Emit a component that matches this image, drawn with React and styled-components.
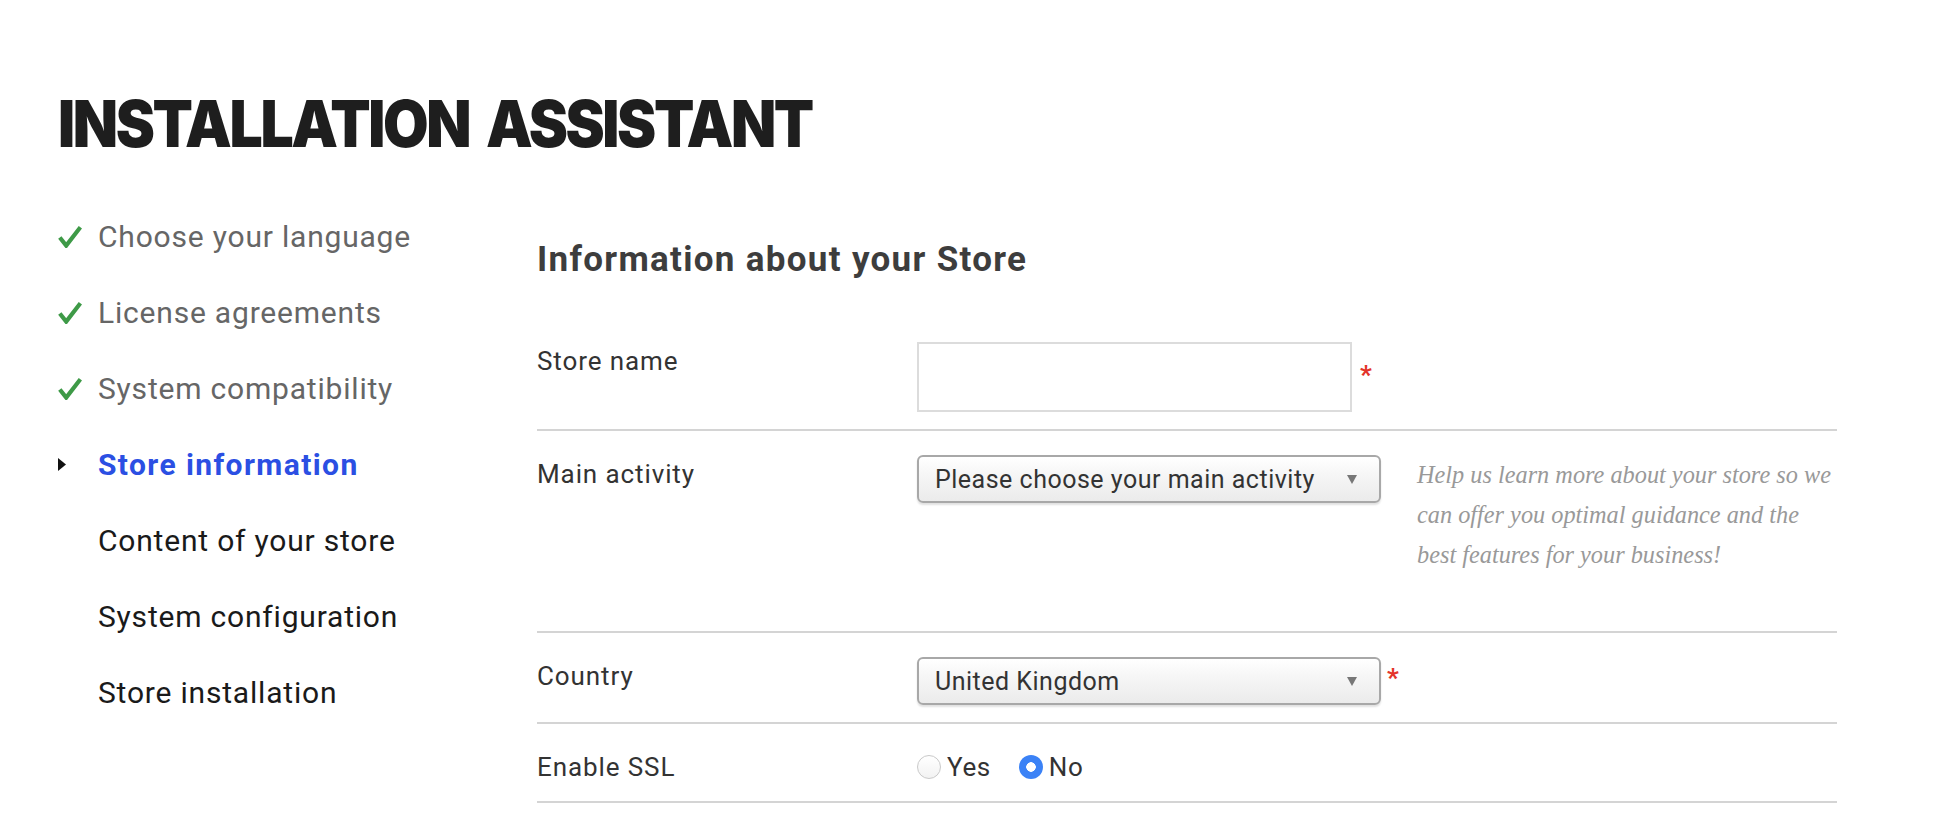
import React from "react";
import styled, { createGlobalStyle } from "styled-components";

const GlobalStyle = createGlobalStyle`
  html, body {
    margin: 0;
    padding: 0;
    background: #fff;
  }
  body {
    font-family: Roboto, "Noto Sans", sans-serif;
    color: #333;
  }
`;

const Page = styled.div`
  padding: 92px 0 0 58px;
  width: 1779px;
`;

const Title = styled.h1`
  margin: 0;
  font-family: Inter, "Liberation Sans", sans-serif;
  font-weight: 900;
  font-size: 64px;
  line-height: 64px;
  letter-spacing: -2.6px;
  word-spacing: 8px;
  color: #1e1e1e;
  text-transform: uppercase;
  transform: scaleX(0.92);
  transform-origin: left center;
`;

const Layout = styled.div`
  display: grid;
  grid-template-columns: 479px 1300px;
  margin-top: 42px;
`;

const Steps = styled.ul`
  list-style: none;
  margin: 0;
  padding: 0;
`;

const Step = styled.li`
  display: flex;
  align-items: center;
  gap: 16px;
  height: 76px;
  font-size: 30px;
  font-weight: ${(p) => (p.$state === "active" ? 700 : 400)};
  letter-spacing: ${(p) => (p.$state === "active" ? "1.4px" : "0.8px")};
  color: ${(p) =>
    p.$state === "done" ? "#666" : p.$state === "active" ? "#2b4fe3" : "#1a1a1a"};
`;

const StepMark = styled.span`
  width: 24px;
  height: 24px;
  display: flex;
  align-items: center;
  justify-content: ${(p) => (p.$active ? "flex-start" : "center")};
  flex: none;
`;

const Main = styled.section``;

const Heading = styled.h2`
  margin: 42px 0 38px;
  font-size: 35px;
  line-height: 40px;
  font-weight: 700;
  letter-spacing: 1.3px;
  color: #3d3d3d;
`;

const Row = styled.div`
  display: grid;
  grid-template-columns: 380px 1fr;
  padding: 24px 0 ${(p) => p.$pb || 17}px;
  & + & {
    border-top: 2px solid #d4d4d4;
  }
  &:last-child {
    border-bottom: 2px solid #d4d4d4;
  }
`;

const Label = styled.div`
  font-size: 26px;
  line-height: 38px;
  letter-spacing: 0.9px;
  color: #333;
`;

const Control = styled.div`
  display: flex;
  align-items: flex-start;
`;

const TextInput = styled.input`
  box-sizing: border-box;
  width: 435px;
  height: 70px;
  border: 2px solid #dcdcdc;
  background: #fff;
  margin: 0;
  padding: 0 14px;
  font: inherit;
  font-size: 24px;
  outline: none;
`;

const Required = styled.span`
  color: #e3342a;
  font-size: 26px;
  font-weight: 700;
  line-height: 1;
  margin-left: ${(p) => p.$gap || 12}px;
  margin-top: ${(p) => p.$top || 20}px;
`;

const Select = styled.div`
  box-sizing: border-box;
  width: 464px;
  height: 48px;
  border: 2px solid #a8a8a8;
  border-radius: 6px;
  background: linear-gradient(#ffffff 0%, #f6f6f6 40%, #ebebeb 100%);
  box-shadow: 0 2px 2px rgba(0, 0, 0, 0.12);
  display: flex;
  align-items: center;
  justify-content: space-between;
  padding: 0 22px 0 16px;
  font-size: 25px;
  letter-spacing: 0.5px;
  color: #333;
  flex: none;
`;

const Help = styled.p`
  margin: 0 0 39px 36px;
  width: 420px;
  font-family: "Liberation Serif", "DejaVu Serif", serif;
  font-style: italic;
  font-size: 24.3px;
  line-height: 40px;
  color: #999;
`;

const Radios = styled.div`
  display: flex;
  align-items: center;
  height: 38px;
  gap: 28px;
`;

const RadioOption = styled.label`
  display: flex;
  align-items: center;
  gap: 6px;
  font-size: 26px;
  letter-spacing: 0.6px;
  color: #333;
`;

const RadioDot = styled.span`
  box-sizing: border-box;
  width: 24px;
  height: 24px;
  border-radius: 50%;
  flex: none;
  border: ${(p) => (p.$on ? "0" : "1px solid #c9c9c9")};
  background: ${(p) =>
    p.$on
      ? "radial-gradient(circle, #fff 0 4.5px, #3b82f6 5px)"
      : "linear-gradient(#fff, #f2f2f2)"};
`;

const Check = () => (
  <svg width="24" height="23" viewBox="0 0 24 23">
    <path
      d="M1.8 12.5 L8.2 20.6 L22.4 2.2"
      fill="none"
      stroke="#3e9a47"
      strokeWidth="4.2"
    />
  </svg>
);

const Caret = () => (
  <svg width="9" height="13" viewBox="0 0 9 13">
    <polygon points="0,0 8,6.5 0,13" fill="#111" />
  </svg>
);

const DownArrow = () => (
  <svg width="10" height="10" viewBox="0 0 10 10">
    <polygon points="0,1 10,1 5,10" fill="#777" />
  </svg>
);

const steps = [
  { label: "Choose your language", state: "done" },
  { label: "License agreements", state: "done" },
  { label: "System compatibility", state: "done" },
  { label: "Store information", state: "active" },
  { label: "Content of your store", state: "todo" },
  { label: "System configuration", state: "todo" },
  { label: "Store installation", state: "todo" },
];

export default function App() {
  return (
    <>
      <GlobalStyle />
      <Page>
        <Title>Installation Assistant</Title>
        <Layout>
          <Steps>
            {steps.map((s) => (
              <Step key={s.label} $state={s.state}>
                <StepMark $active={s.state === "active"}>
                  {s.state === "done" && <Check />}
                  {s.state === "active" && <Caret />}
                </StepMark>
                {s.label}
              </Step>
            ))}
          </Steps>

          <Main>
            <Heading>Information about your Store</Heading>

            <Row>
              <Label>Store name</Label>
              <Control>
                <TextInput type="text" />
                <Required $gap={8} $top={20}>*</Required>
              </Control>
            </Row>

            <Row>
              <Label>Main activity</Label>
              <Control>
                <Select>
                  <span>Please choose your main activity</span>
                  <DownArrow />
                </Select>
                <Help>
                  Help us learn more about your store so we can offer you
                  optimal guidance and the best features for your business!
                </Help>
              </Control>
            </Row>

            <Row>
              <Label>Country</Label>
              <Control>
                <Select>
                  <span>United Kingdom</span>
                  <DownArrow />
                </Select>
                <Required $gap={6} $top={8}>*</Required>
              </Control>
            </Row>

            <Row $pb={15}>
              <Label>Enable SSL</Label>
              <Radios>
                <RadioOption>
                  <RadioDot />
                  Yes
                </RadioOption>
                <RadioOption>
                  <RadioDot $on />
                  No
                </RadioOption>
              </Radios>
            </Row>
          </Main>
        </Layout>
      </Page>
    </>
  );
}
